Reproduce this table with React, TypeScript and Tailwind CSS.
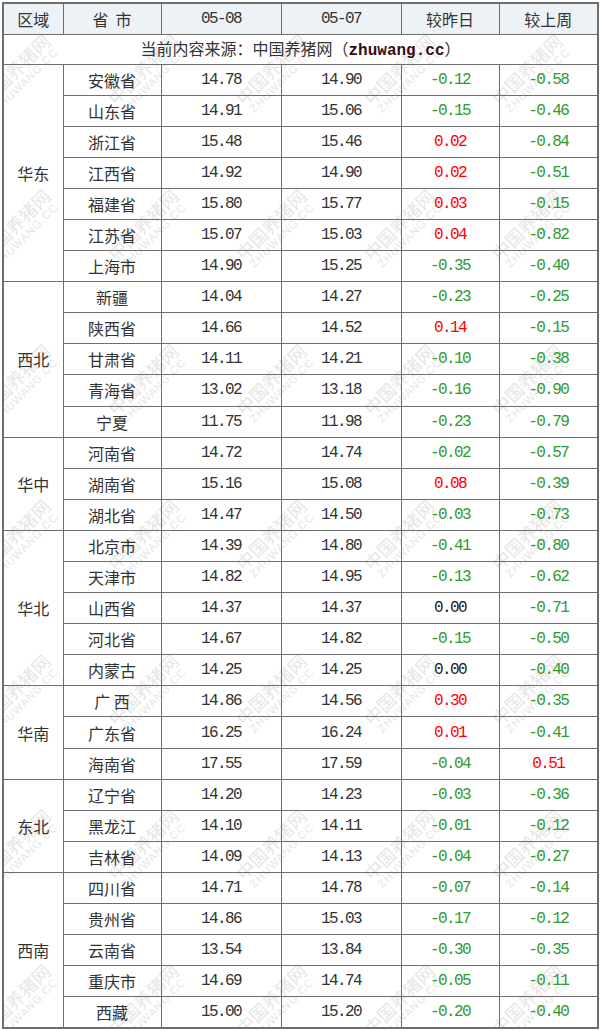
import React from "react";

type Row = [string, string, string, string, string];
type Group = { region: string; rows: Row[] };

const groups: Group[] = [
  {
    region: "华东",
    rows: [
      ["安徽省", "14.78", "14.90", "-0.12", "-0.58"],
      ["山东省", "14.91", "15.06", "-0.15", "-0.46"],
      ["浙江省", "15.48", "15.46", "0.02", "-0.84"],
      ["江西省", "14.92", "14.90", "0.02", "-0.51"],
      ["福建省", "15.80", "15.77", "0.03", "-0.15"],
      ["江苏省", "15.07", "15.03", "0.04", "-0.82"],
      ["上海市", "14.90", "15.25", "-0.35", "-0.40"],
    ],
  },
  {
    region: "西北",
    rows: [
      ["新疆", "14.04", "14.27", "-0.23", "-0.25"],
      ["陕西省", "14.66", "14.52", "0.14", "-0.15"],
      ["甘肃省", "14.11", "14.21", "-0.10", "-0.38"],
      ["青海省", "13.02", "13.18", "-0.16", "-0.90"],
      ["宁夏", "11.75", "11.98", "-0.23", "-0.79"],
    ],
  },
  {
    region: "华中",
    rows: [
      ["河南省", "14.72", "14.74", "-0.02", "-0.57"],
      ["湖南省", "15.16", "15.08", "0.08", "-0.39"],
      ["湖北省", "14.47", "14.50", "-0.03", "-0.73"],
    ],
  },
  {
    region: "华北",
    rows: [
      ["北京市", "14.39", "14.80", "-0.41", "-0.80"],
      ["天津市", "14.82", "14.95", "-0.13", "-0.62"],
      ["山西省", "14.37", "14.37", "0.00", "-0.71"],
      ["河北省", "14.67", "14.82", "-0.15", "-0.50"],
      ["内蒙古", "14.25", "14.25", "0.00", "-0.40"],
    ],
  },
  {
    region: "华南",
    rows: [
      ["广 西", "14.86", "14.56", "0.30", "-0.35"],
      ["广东省", "16.25", "16.24", "0.01", "-0.41"],
      ["海南省", "17.55", "17.59", "-0.04", "0.51"],
    ],
  },
  {
    region: "东北",
    rows: [
      ["辽宁省", "14.20", "14.23", "-0.03", "-0.36"],
      ["黑龙江", "14.10", "14.11", "-0.01", "-0.12"],
      ["吉林省", "14.09", "14.13", "-0.04", "-0.27"],
    ],
  },
  {
    region: "西南",
    rows: [
      ["四川省", "14.71", "14.78", "-0.07", "-0.14"],
      ["贵州省", "14.86", "15.03", "-0.17", "-0.12"],
      ["云南省", "13.54", "13.84", "-0.30", "-0.35"],
      ["重庆市", "14.69", "14.74", "-0.05", "-0.11"],
      ["西藏", "15.00", "15.20", "-0.20", "-0.40"],
    ],
  },
];

const cjk = "font-['Noto_Sans_CJK_SC',sans-serif] text-[16px] text-[#333]";
const num = "font-['Liberation_Mono',monospace] text-[16px] tracking-[-1.6px]";
const cell = "border border-[#6e6e6e] text-center align-middle p-0";

function changeColor(v: string) {
  if (v.startsWith("-")) return "text-[#2f9a2f]";
  if (v === "0.00") return "text-[#222]";
  return "text-[#ff0000]";
}

function Watermarks() {
  const items: { x: number; y: number }[] = [];
  for (let r = 0; r < 8; r++) {
    for (let c = 0; c < 6; c++) {
      items.push({ x: -28 + c * 128, y: 55 + r * 155 });
    }
  }
  return (
    <div className="pointer-events-none absolute inset-0 overflow-hidden">
      {items.map((p, i) => (
        <div
          key={i}
          className="absolute flex flex-col items-center -rotate-45 text-[#e6e6e6]"
          style={{ left: p.x, top: p.y }}
        >
          <span className="font-['Noto_Sans_CJK_SC',sans-serif] text-[18px] leading-[20px]">中国养猪网</span>
          <span className="font-['Liberation_Sans',sans-serif] text-[11px] leading-[13px] tracking-[1px]">ZHUWANG.CC</span>
        </div>
      ))}
    </div>
  );
}

export default function App() {
  return (
    <div className="w-[600px] h-[1031px] bg-white pl-[2px] pt-[2px]">
      <div className="relative w-[597px]">
        <Watermarks />
        <table className="relative table-fixed border-collapse border-2 border-[#6e6e6e] w-[597px]">
          <colgroup>
            <col className="w-[60px]" />
            <col className="w-[98px]" />
            <col className="w-[120px]" />
            <col className="w-[120px]" />
            <col className="w-[98px]" />
            <col className="w-[99px]" />
          </colgroup>
          <thead>
            <tr className="h-[31px] bg-[#edf2f7]">
              <th className={`${cell} ${cjk} font-normal`}>区域</th>
              <th className={`${cell} ${cjk} font-normal`}>省&nbsp;&nbsp;市</th>
              <th className={`${cell} ${num} font-normal text-[#333]`}>05-08</th>
              <th className={`${cell} ${num} font-normal text-[#333]`}>05-07</th>
              <th className={`${cell} ${cjk} font-normal`}>较昨日</th>
              <th className={`${cell} ${cjk} font-normal`}>较上周</th>
            </tr>
          </thead>
          <tbody>
            <tr className="h-[30px]">
              <td colSpan={6} className={`${cell} ${cjk}`}>
                当前内容来源：中国养猪网（
                <span className="font-['Liberation_Mono',monospace] font-bold text-[#3a0a14]">zhuwang.cc</span>
                ）
              </td>
            </tr>
            {groups.map((g) =>
              g.rows.map((r, i) => (
                <tr key={g.region + r[0]} className="h-[31.1px]">
                  {i === 0 && (
                    <td rowSpan={g.rows.length} className={`${cell} ${cjk}`}>
                      {g.region}
                    </td>
                  )}
                  <td className={`${cell} ${cjk} whitespace-pre`}>{r[0]}</td>
                  <td className={`${cell} ${num} text-[#333]`}>{r[1]}</td>
                  <td className={`${cell} ${num} text-[#333]`}>{r[2]}</td>
                  <td className={`${cell} ${num} ${changeColor(r[3])}`}>{r[3]}</td>
                  <td className={`${cell} ${num} ${changeColor(r[4])}`}>{r[4]}</td>
                </tr>
              ))
            )}
          </tbody>
        </table>
      </div>
    </div>
  );
}
